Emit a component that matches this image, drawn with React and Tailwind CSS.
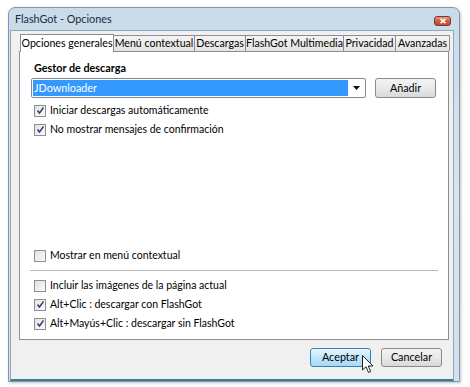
import React from "react";

const font = { fontFamily: 'Lato, "Noto Sans", sans-serif' };

function Check({ checked, label }) {
  return (
    <div className="flex items-center h-[19px] pl-[3px]">
      <div className="w-[12px] h-[12px] border border-[#8e8f8f] bg-gradient-to-br from-[#e2e2e2] to-[#fbfbfb] flex items-center justify-center">
        {checked && (
          <svg width="9" height="9" viewBox="0 0 9 9">
            <path d="M1.5 4.5 L3.5 7 L7.5 1.5" fill="none" stroke="#2a3d6b" strokeWidth="1.4" />
          </svg>
        )}
      </div>
      <span className="ml-[4px] text-[10.5px] text-black leading-none whitespace-nowrap">{label}</span>
    </div>
  );
}

function Tab({ label, selected, w }) {
  if (selected) {
    return (
      <div
        className="h-[18px] -mb-[1px] border border-b-0 border-[#8c8e94] bg-white flex items-center justify-center text-[10.6px] text-black z-10 relative whitespace-nowrap"
        style={{ width: w }}
      >
        {label}
      </div>
    );
  }
  return (
    <div
      className="h-[16px] border border-b-0 border-l-0 border-[#8c8e94] bg-gradient-to-b from-[#f4f4f4] to-[#e3e3e3] flex items-center justify-center text-[10.6px] text-black whitespace-nowrap overflow-hidden"
      style={{ width: w }}
    >
      {label}
    </div>
  );
}

export default function App() {
  return (
    <div className="w-[470px] h-[387px] bg-white relative overflow-hidden" style={font}>
      <div className="absolute left-[8px] top-[7px] w-[452px] h-[375px] rounded-t-[7px] border border-[#7e98ad] bg-gradient-to-b from-[#c9dbea] via-[#d6e4f0] to-[#d2e1ed] flex flex-col shadow-[1px_1px_3px_rgba(0,0,0,0.25)]">
        {/* Title bar */}
        <div className="h-[22px] flex items-center justify-between pl-[6px] pr-[8px] shrink-0">
          <span className="text-[10.8px] text-[#1a2a3a]">FlashGot - Opciones</span>
          <div className="w-[17px] h-[10px] mt-[3px] rounded-[3px] border border-[#7a3a2a] bg-gradient-to-b from-[#e89a88] via-[#cf5a43] to-[#c74a32] flex items-center justify-center">
            <svg width="8" height="6" viewBox="0 0 8 6">
              <path d="M1.5 0.8 L6.5 5.2 M6.5 0.8 L1.5 5.2" stroke="white" strokeWidth="1.6" />
            </svg>
          </div>
        </div>
        {/* Body */}
        <div className="ml-[1px] mr-[5px] flex-1 bg-[#f0f0f0] border border-[#93a7b8] border-b-[2px] border-b-[#3b7d8a] flex flex-col">
          {/* tabs */}
          <div className="flex items-end pl-[9px] pt-[3px]">
            <Tab label="Opciones generales" selected w={94} />
            <Tab label="Menú contextual" w={81} />
            <Tab label="Descargas" w={51} />
            <Tab label="FlashGot Multimedia" w={98} />
            <Tab label="Privacidad" w={52} />
            <Tab label="Avanzadas" w={54} />
          </div>
          {/* panel */}
          <div className="ml-[8px] w-[430px] h-[289px] border border-[#8c8e94] bg-white flex flex-col">
            <div className="pl-[14px] pt-[8px] text-[10.8px] font-bold text-black leading-[16px]">Gestor de descarga</div>
            <div className="flex items-center mt-[2px] pl-[11px]">
              <div className="w-[335px] h-[20px] border border-[#7a8a9c] rounded-[2px] flex bg-white p-[1px]">
                <div className="flex-1 bg-[#3399ff] text-white text-[10.8px] flex items-center pl-[1px] leading-none">JDownloader</div>
                <div className="w-[16px] flex items-center justify-center">
                  <svg width="7" height="4" viewBox="0 0 7 4"><path d="M0 0 H7 L3.5 4 Z" fill="#111" /></svg>
                </div>
              </div>
              <div className="ml-[9px] w-[61px] h-[20px] rounded-[3px] border border-[#8a8a8a] bg-gradient-to-b from-[#f4f4f4] via-[#e9e9e9] to-[#d9d9d9] text-[10.8px] text-black flex items-center justify-center">
                Añadir
              </div>
            </div>
            <div className="mt-[3px] pl-[11px] flex flex-col">
              <Check checked label="Iniciar descargas automáticamente" />
              <Check checked label="No mostrar mensajes de confirmación" />
            </div>
            <div className="flex-1" />
            <div className="pl-[11px]">
              <Check label="Mostrar en menú contextual" />
            </div>
            <div className="mx-[10px] my-[5px] h-px bg-[#b8b8b8]" />
            <div className="pl-[11px] flex flex-col pb-[6px]">
              <Check label="Incluir las imágenes de la página actual" />
              <Check checked label="Alt+Clic : descargar con FlashGot" />
              <Check checked label="Alt+Mayús+Clic : descargar sin FlashGot" />
            </div>
          </div>
          {/* buttons */}
          <div className="flex justify-end pr-[11px] pt-[8px] gap-[10px]">
            <div className="relative w-[61px] h-[19px] rounded-[3px] border border-[#3c7fb1] bg-gradient-to-b from-[#eaf6fd] via-[#bee6fd] to-[#a7d9f5] text-[10.8px] text-black flex items-center justify-center">
              Aceptar
              <svg className="absolute left-[51px] top-[6px]" width="12" height="19" viewBox="0 0 12 19">
                <path d="M0.5 0.5 L0.5 15 L4 11.7 L6.5 17.5 L8.7 16.5 L6.3 11 L11 11 Z" fill="white" stroke="#222" strokeWidth="1" />
              </svg>
            </div>
            <div className="w-[61px] h-[19px] rounded-[3px] border border-[#8a8a8a] bg-gradient-to-b from-[#f4f4f4] via-[#e9e9e9] to-[#d9d9d9] text-[10.8px] text-black flex items-center justify-center">
              Cancelar
            </div>
          </div>
        </div>
      </div>
    </div>
  );
}
